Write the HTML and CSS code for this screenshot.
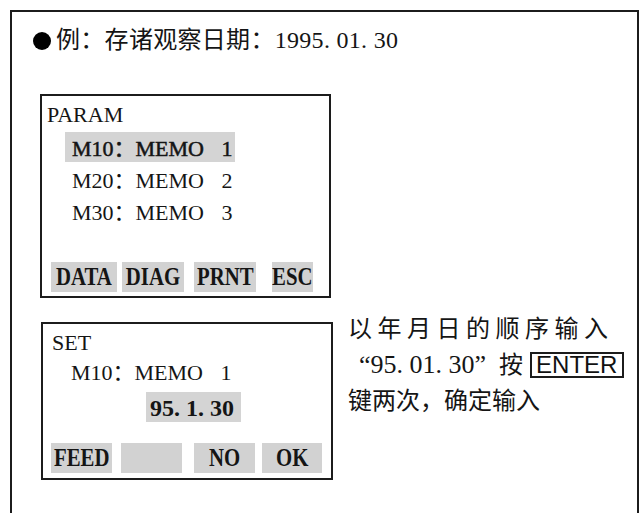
FILE: index.html
```html
<!DOCTYPE html>
<html lang="zh-CN">
<head>
<meta charset="utf-8">
<title>存诸观察日期</title>
<link rel="stylesheet" href="styles.css">
</head>
<body>
<div class="frame">
  <p class="title"><span class="dot"></span>例：存诸观察日期：1995. 01. 30</p>

  <div class="lcd lcd-param">
    <div class="head">PARAM</div>
    <div class="row row-first"><span class="sel">M10：MEMO 1</span></div>
    <div class="row">M20：MEMO 2</div>
    <div class="row">M30：MEMO 3</div>
    <div class="keys">
      <span class="key key-data"><span class="lbl">DATA</span></span>
      <span class="key key-diag"><span class="lbl">DIAG</span></span>
      <span class="key key-prnt"><span class="lbl">PRNT</span></span>
      <span class="key key-esc"><span class="lbl">ESC</span></span>
    </div>
  </div>

  <div class="step">
    <div class="lcd lcd-set">
      <div class="head">SET</div>
      <div class="row">M10：MEMO 1</div>
      <div class="date"><span class="sel-date">95. 1. 30</span></div>
      <div class="keys">
        <span class="key key-feed"><span class="lbl">FEED</span></span>
        <span class="key key-blank"></span>
        <span class="key key-no"><span class="lbl">NO</span></span>
        <span class="key key-ok"><span class="lbl">OK</span></span>
      </div>
    </div>
    <div class="note">
      <div class="line spaced">以年月日的顺序输入</div>
      <div class="line indent"><span class="q">“95. 01. 30”</span><span class="press">按</span><span class="enter">ENTER</span></div>
      <div class="line">键两次，确定输入</div>
    </div>
  </div>
</div>
</body>
</html>
```

FILE: styles.css
```css
html, body {
  margin: 0;
  padding: 0;
  background: #ffffff;
  height: 100%;
  overflow: hidden;
}

body {
  font-family: "Liberation Serif", "Noto Sans CJK SC", serif;
  color: #151515;
}

.frame {
  margin: 10px 3px 0 10px;
  height: calc(100vh - 10px);
  box-sizing: border-box;
  border: 2px solid #1c1c1c;
  border-bottom: 0;
}

.title {
  margin: 13px 0 0 0;
  padding-left: 21px;
  font-size: 24px;
  line-height: 30px;
  letter-spacing: 0.3px;
}

.dot {
  display: inline-block;
  width: 18px;
  height: 18px;
  border-radius: 50%;
  background: #000;
  margin-right: 5px;
  vertical-align: -2px;
}

.lcd {
  box-sizing: border-box;
  border: 2px solid #1c1c1c;
  display: flex;
  flex-direction: column;
  font-size: 22px;
}

.lcd-param {
  margin: 39px 0 0 28px;
  width: 291px;
  height: 204px;
  padding: 5px 0 4px 5px;
}

.lcd-set {
  margin: 11px 0 0 29px;
  width: 292px;
  height: 158px;
  padding: 5px 0 5px 9px;
  flex: none;
}

.head {
  line-height: 28px;
}

.row {
  line-height: 32px;
  padding-left: 25px;
  word-spacing: 12px;
}

.lcd-set .row {
  padding-left: 19px;
}

.row-first {
  margin-top: 3px;
}

.sel {
  display: inline-block;
  background: #d4d4d4;
  padding: 3px 2px 0 7px;
  margin-left: -7px;
  line-height: 27px;
  -webkit-text-stroke: 0.5px #151515;
}

.date {
  margin-top: 3px;
  padding-left: 94px;
  line-height: 30px;
}

.sel-date {
  display: inline-block;
  background: #d4d4d4;
  font-size: 24px;
  font-weight: bold;
  line-height: 27px;
  padding: 3px 7px 0 4px;
}

.keys {
  margin-top: auto;
  display: flex;
  height: 30px;
}

.key {
  display: flex;
  justify-content: center;
  align-items: center;
  height: 30px;
  background: #d2d2d2;
  flex: none;
}

.lbl {
  display: inline-block;
  font-size: 26px;
  font-weight: bold;
  line-height: 30px;
  transform: scaleX(0.8);
  white-space: nowrap;
}

.key-data { width: 66px; margin-left: 4px; }
.key-diag { width: 62px; margin-left: 5px; }
.key-prnt { width: 62px; margin-left: 10px; }
.key-esc  { width: 41px; margin-left: 16px; }

.key-feed  { width: 61px; margin-left: -1px; }
.key-blank { width: 61px; margin-left: 9px; }
.key-no    { width: 61px; margin-left: 12px; }
.key-ok    { width: 60px; margin-left: 7px; }

.step {
  display: flex;
  align-items: flex-start;
  margin-top: 13px;
}

.note {
  margin-left: 15px;
  font-size: 24px;
  line-height: 36px;
  white-space: nowrap;
}

.line.spaced {
  letter-spacing: 5.5px;
}

.line.indent {
  padding-left: 11px;
}

.q {
  font-size: 26px;
}

.press {
  margin: 0 7px 0 13px;
}

.enter {
  display: inline-block;
  font-family: "Liberation Sans", Arial, sans-serif;
  font-size: 24px;
  line-height: 22px;
  border: 2px solid #1c1c1c;
  padding: 0 5px 0 4px;
  color: #111;
}
```
